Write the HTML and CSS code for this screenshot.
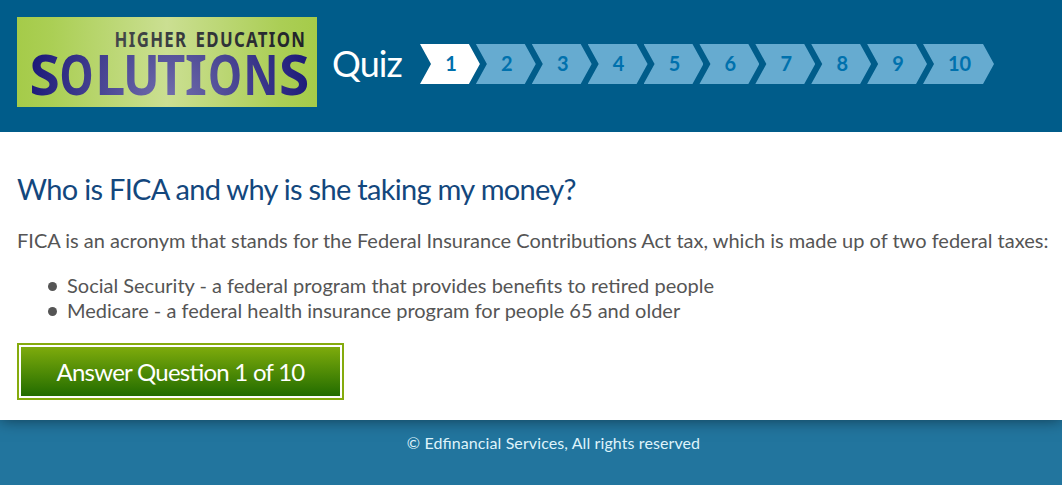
FILE: index.html
```html
<!DOCTYPE html>
<html lang="en">
<head>
<meta charset="utf-8">
<title>Quiz</title>
<link rel="stylesheet" href="styles.css">
</head>
<body>
<header class="header">
  <svg class="logo" viewBox="0 0 300 90" role="img" aria-label="Higher Education Solutions">
    <defs>
      <linearGradient id="plate"><stop offset="0" stop-color="#a5cb49"/><stop offset=".12" stop-color="#abcf55"/><stop offset=".5" stop-color="#cbdf92"/><stop offset=".88" stop-color="#abce55"/><stop offset="1" stop-color="#a5cb49"/></linearGradient>
      <radialGradient id="ink" gradientUnits="userSpaceOnUse" cx="152" cy="86" r="145"><stop offset="0" stop-color="#7470ad"/><stop offset="1" stop-color="#1b1878"/></radialGradient>
      <linearGradient id="grey"><stop offset="0" stop-color="#44484a"/><stop offset="1" stop-color="#202229"/></linearGradient>
    </defs>
    <rect width="300" height="90" fill="url(#plate)"/>
    <g transform="scale(.8 1)">
      <text class="logo-small" x="122" y="30" textLength="238" lengthAdjust="spacing" fill="url(#grey)">HIGHER EDUCATION</text>
    </g>
    <text class="logo-large" y="77.5" fill="url(#ink)"><tspan x="12.6" textLength="30.3" lengthAdjust="spacingAndGlyphs">S</tspan><tspan x="42.4" textLength="34.1" lengthAdjust="spacingAndGlyphs">O</tspan><tspan x="78.2" textLength="30" lengthAdjust="spacingAndGlyphs">L</tspan><tspan x="105.9" textLength="36.8" lengthAdjust="spacingAndGlyphs">U</tspan><tspan x="140" textLength="28.3" lengthAdjust="spacingAndGlyphs">T</tspan><tspan x="167.7" textLength="22.3" lengthAdjust="spacingAndGlyphs">I</tspan><tspan x="190.9" textLength="34.1" lengthAdjust="spacingAndGlyphs">O</tspan><tspan x="226.6" textLength="34.9" lengthAdjust="spacingAndGlyphs">N</tspan><tspan x="262.1" textLength="30.3" lengthAdjust="spacingAndGlyphs">S</tspan></text>
  </svg>
  <h1 class="title">Quiz</h1>
  <ol class="steps">
    <li class="step current">1</li><li class="step">2</li><li class="step">3</li><li class="step">4</li><li class="step">5</li><li class="step">6</li><li class="step">7</li><li class="step">8</li><li class="step">9</li><li class="step last">10</li>
  </ol>
</header>
<main class="content">
  <h2 class="question">Who is FICA and why is she taking my money?</h2>
  <p class="text">FICA is an acronym that stands for the Federal Insurance Contributions Act tax, which is made up of two federal taxes:</p>
  <ul class="list">
    <li>Social Security - a federal program that provides benefits to retired people</li>
    <li>Medicare - a federal health insurance program for people 65 and older</li>
  </ul>
  <button class="answer">Answer Question 1 of 10</button>
</main>
<footer class="footer">© Edfinancial Services, All rights reserved</footer>
</body>
</html>
```
FILE: styles.css
```css
* { box-sizing: border-box; }
body {
  margin: 0;
  height: 485px;
  overflow: hidden;
  background: #22759e;
  color: #555;
  font-family: Lato, sans-serif;
  font-size: 20px;
  line-height: 25px;
}
.header {
  display: flex;
  align-items: flex-start;
  height: 132px;
  padding: 17px 0 0 17px;
  background: #005c8a;
}
.logo { flex: none; width: 300px; height: 90px; }
.logo-small { font: 700 21px "Noto Sans", sans-serif; word-spacing: 3px; }
.logo-large { font: 700 55px "Noto Sans", sans-serif; }
.title {
  width: 88px;
  margin: 25px 0 0 15px;
  color: #fff;
  font-size: 36px;
  font-weight: 400;
  letter-spacing: -.9px;
  line-height: 42px;
}
.steps { display: flex; margin: 27px 0 0; padding: 0; list-style: none; }
.step {
  width: 59.9px;
  height: 40px;
  margin-right: -4px;
  padding-left: 2px;
  background: #66abd0;
  clip-path: polygon(0 0, calc(100% - 11px) 0, 100% 50%, calc(100% - 11px) 100%, 0 100%, 11px 50%);
  color: #0071ad;
  font-weight: 700;
  line-height: 39px;
  text-align: center;
}
.current { background: #fff; }
.last { width: 71px; margin-right: 0; }
.content {
  position: relative;
  height: 288px;
  padding: 39px 0 0 17px;
  background: #fff;
  box-shadow: 0 0 15px rgba(0, 0, 0, .5);
  clip-path: inset(0 0 -30px 0);
}
.question { margin: 0; color: #13477d; font-size: 29px; font-weight: 400; letter-spacing: -.7px; line-height: 36px; }
.text { margin: 21px 0 20px; white-space: nowrap; }
.list { margin: 0; padding-left: 50px; list-style: none; }
.list li { display: flex; align-items: center; }
.list li::before {
  content: "";
  width: 9px;
  height: 9px;
  margin: 2px 10px 0 -19px;
  border-radius: 50%;
  background: #555;
}
.answer {
  display: block;
  width: 327px;
  height: 57px;
  margin-top: 20px;
  padding: 2px;
  border: 2px solid #85ab0d;
  background: linear-gradient(#7eab0c, #226c00) content-box, #fff;
  color: #fff;
  font: 24px/49px Lato, sans-serif;
  letter-spacing: -.75px;
  font-feature-settings: "liga" 1;
}
.footer { padding: 13px 0 0 45px; color: #dff3fb; font-size: 16px; letter-spacing: .1px; font-feature-settings: "liga" 1; line-height: 20px; text-align: center; }
```
